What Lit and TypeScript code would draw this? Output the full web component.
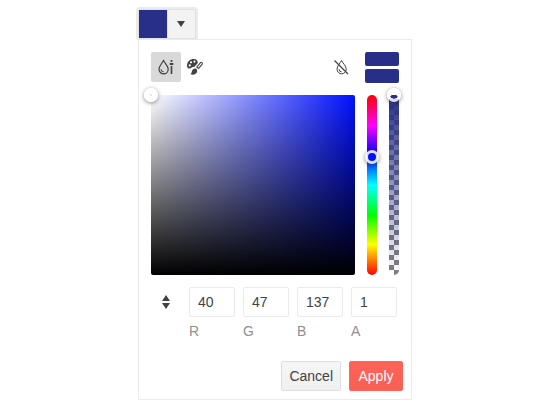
import { LitElement, html, css } from "lit";
import { customElement, state } from "lit/decorators.js";

interface Channel {
  label: string;
  value: string;
}

@customElement("app-root")
export class AppRoot extends LitElement {
  @state() private channels: Channel[] = [
    { label: "R", value: "40" },
    { label: "G", value: "47" },
    { label: "B", value: "137" },
    { label: "A", value: "1" },
  ];
  @state() private hueThumb = 34.5;
  @state() private alphaThumb = 0;

  static styles = css`
    :host {
      display: block;
      box-sizing: border-box;
      min-height: 100vh;
      padding: 9px 25% 8px;
      background: #fff;
      color: #424242;
      font: 14px/20px "Liberation Sans", Arial, sans-serif;
    }
    * {
      box-sizing: border-box;
    }
    button,
    input {
      font: inherit;
      color: inherit;
      margin: 0;
    }
    button {
      padding: 0;
      cursor: pointer;
    }
    svg {
      display: block;
    }
    .trigger {
      display: flex;
      width: 58px;
      height: 30px;
      border: 1px solid #e1e1e1;
      border-radius: 2px;
      background: #f3f3f3;
      box-shadow: 0 0 0 2px #ebebeb;
    }
    .current {
      width: 28px;
      height: 28px;
      background: #282f89;
    }
    .caret {
      display: grid;
      flex: 1;
      height: 28px;
      padding-right: 1px;
      place-items: center;
      border-left: 1px solid #e1e1e1;
    }
    .popup {
      position: relative;
      max-width: 274px;
      border: 1px solid #ebebeb;
      background: #fff;
    }
    .editor {
      display: flex;
      flex-direction: column;
      gap: 12px;
      padding: 12px 12px 20px;
    }
    .header {
      display: flex;
      align-items: flex-start;
      height: 31px;
    }
    .tool {
      display: grid;
      place-items: center;
      width: 30px;
      height: 30px;
      border: 0;
      border-radius: 2px;
      background: none;
    }
    .selected {
      background: #d9d9d9;
    }
    .palette {
      width: 28px;
    }
    .clear {
      margin-left: auto;
      margin-right: 9px;
    }
    .previews {
      display: grid;
      gap: 3px;
      width: 34px;
    }
    .preview {
      height: 14px;
      border-radius: 2px;
      background: #282f89;
    }
    .canvas {
      display: flex;
      gap: 12px;
      height: 180px;
    }
    .field {
      position: relative;
      flex: 1;
      border-radius: 2px;
      background: linear-gradient(to top, #000, transparent),
        linear-gradient(to right, #fff, #0010ff);
    }
    .track {
      position: relative;
      width: 10px;
      border-radius: 5px;
    }
    .hue {
      background: linear-gradient(
        to bottom,
        #f00,
        #f0f 17%,
        #00f 33%,
        #0ff 50%,
        #0f0 67%,
        #ff0 83%,
        #f00
      );
    }
    .alpha {
      background: linear-gradient(to bottom, #282f89, rgba(40, 47, 137, 0)),
        repeating-conic-gradient(#fff 0 25%, #808080 0 50%) 0 0 / 10px 10px;
    }
    .thumb {
      position: absolute;
      left: 50%;
      width: 14px;
      height: 14px;
      border: 3px solid rgba(255, 255, 255, 0.85);
      border-radius: 50%;
      transform: translate(-50%, -50%);
      box-shadow: 0 1px 4px rgba(33, 33, 33, 0.55);
    }
    .hue .thumb {
      background: #0010ff padding-box;
    }
    .alpha .thumb {
      border-color: #fff #fff #dcdcea;
      background: radial-gradient(ellipse 4px 2px at 50% 72%, #282f89 85%, #fff);
    }
    .field .thumb {
      left: 0;
      top: 0;
      border-color: #fff;
      background: radial-gradient(circle at center, #e2e2ff 1px, #fff 1px);
    }
    .inputs {
      display: flex;
      gap: 8px;
      padding-right: 2px;
    }
    .channel {
      display: flex;
      flex: 1;
      flex-direction: column;
      gap: 4px;
      min-width: 0;
      color: #8f8f8f;
    }
    .value {
      width: 100%;
      height: 30px;
      padding: 0 8px;
      border: 1px solid #ebebeb;
      border-radius: 2px;
      background: #fff;
      color: #424242;
    }
    .actions {
      display: flex;
      justify-content: flex-end;
      gap: 8px;
      padding: 0 8px 8px;
    }
    .action {
      min-width: 54px;
      height: 30px;
      padding: 0 7px;
      border: 1px solid #dedede;
      border-radius: 2px;
      background: linear-gradient(#f6f6f6, #f0f0f0);
    }
    .primary {
      border-color: #ff6358;
      background: linear-gradient(#ff6358, #f66055);
      color: #fff;
    }
  `;

  render() {
    return html`
      <button class="trigger" aria-label="Choose color">
        <span class="current"></span>
        <span class="caret">
          <svg width="8" height="6" viewBox="0 0 8 6"><path d="M0 0h8L4 6z" fill="#424242" /></svg>
        </span>
      </button>
      <div class="popup">
        <div class="editor">
          <div class="header">
            <button class="tool selected" aria-label="Gradient view">
              <svg width="16" height="16" viewBox="0 0 16 16" fill="none" stroke="#424242">
                <path d="M5.500 1.500C4 4.500 1 7 1 10.200a4.600 4.600 0 0 0 9.200 0C10.200 7 7 4.500 5.500 1.500z" stroke-width="1.200" />
                <path d="M3 10.200a2.600 2.600 0 0 0 2.600 2.600" />
                <path d="M13.500 1v2M13.500 7v8" stroke-width="1.600" />
                <path d="M11.700 5h3.600" stroke-width="2" />
              </svg>
            </button>
            <button class="tool palette" aria-label="Palette view">
              <svg width="18" height="18" viewBox="0 0 18 18" fill="#424242">
                <path fill-rule="evenodd" d="M8 1C4 1 1 3.700 1 7.500c0 2.300 1.300 3.500 2.700 3C5.500 9.800 6.500 8.800 8.500 8.800L11.800 5C12 3 10.500 1 8 1zM3.700 6.300a1.100 1.100 0 1 0 0 2.200 1.100 1.100 0 0 0 0-2.200zM5 3.200a1.100 1.100 0 1 0 0 2.200 1.100 1.100 0 0 0 0-2.200zM8.500 2.500a1.100 1.100 0 1 0 0 2.200 1.100 1.100 0 0 0 0-2.200z" />
                <path d="M10.500 11c1.200 1.400.8 3.500-.8 4.700-1.700 1.300-4 1.300-5.200.3 1.500-.7 1-3 2.300-4.500 1-1 2.800-1.400 3.700-.5z" />
                <path d="M10.800 9.200l3.700-4.500c.9-.9 2.400.4 1.700 1.400l-3.600 4.400z" fill="none" stroke="#424242" stroke-width="1.100" />
              </svg>
            </button>
            <button class="tool clear" aria-label="Clear color">
              <svg width="16" height="16" viewBox="0 0 16 16" fill="none" stroke="#424242">
                <path d="M8.500 1.500C7 4.500 4 7 4 10.200a4.600 4.600 0 0 0 9.200 0C13.200 7 10 4.500 8.500 1.500z" />
                <path d="M6 10.200a2.600 2.600 0 0 0 2.600 2.600" />
                <path d="M1.500 1.500l13.500 13.500" stroke-width="1.200" />
              </svg>
            </button>
            <div class="previews">
              <span class="preview"></span>
              <span class="preview"></span>
            </div>
          </div>
          <div class="canvas">
            <div class="field"><span class="thumb"></span></div>
            <div class="track hue"><span class="thumb" style="top:${this.hueThumb}%"></span></div>
            <div class="track alpha"><span class="thumb" style="top:${this.alphaThumb}%"></span></div>
          </div>
          <div class="inputs">
            <button class="tool" aria-label="Change color format">
              <svg width="8" height="14" viewBox="0 0 8 14" fill="#424242"><path d="M4 0l4 6H0zM4 14l4-6H0z" /></svg>
            </button>
            ${this.channels.map(
              (c) => html`<label class="channel">
                <input class="value" .value=${c.value} />
                <span>${c.label}</span>
              </label>`
            )}
          </div>
        </div>
        <div class="actions">
          <button class="action">Cancel</button>
          <button class="action primary">Apply</button>
        </div>
      </div>
    `;
  }
}
